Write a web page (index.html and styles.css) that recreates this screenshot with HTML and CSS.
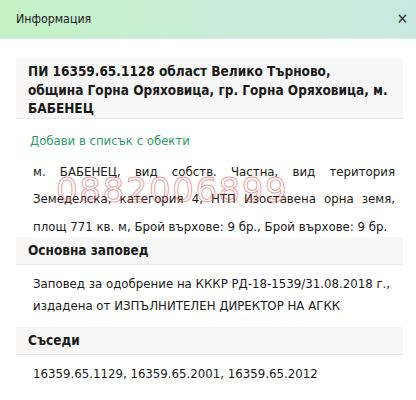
FILE: index.html
```html
<!DOCTYPE html>
<html lang="bg">
<head>
    <meta charset="UTF-8">
    <meta name="viewport" content="width=device-width, initial-scale=1.0">
    <title>Информация</title>
    <link rel="stylesheet" href="styles.css">
</head>
<body>
    <div class="info-panel">
        <div class="info-header">
            <span class="info-title">Информация</span>
            <span class="close-btn">&#x2715;</span>
        </div>
        <div class="info-body">
            <div class="parcel-title">ПИ 16359.65.1128 област Велико Търново,<br>община Горна Оряховица, гр. Горна Оряховица, м. БАБЕНЕЦ</div>
            <a class="add-link" href="#">Добави в списък с обекти</a>
            <div class="parcel-desc">
                <p>м. БАБЕНЕЦ, вид собств. Частна, вид територия Земеделска, категория 4, НТП Изоставена орна земя, площ 771 кв. м, Брой върхове: 9 бр., Брой върхове: 9 бр.</p>
                <span class="watermark">0882006899</span>
            </div>
            <div class="section-head first">Основна заповед</div>
            <p class="section-text">Заповед за одобрение на КККР РД-18-1539/31.08.2018 г., издадена от ИЗПЪЛНИТЕЛЕН ДИРЕКТОР НА АГКК</p>
            <div class="section-head">Съседи</div>
            <p class="section-text">16359.65.1129, 16359.65.2001, 16359.65.2012</p>
        </div>
    </div>
</body>
</html>
```

FILE: styles.css
```css
body {
    margin: 0;
    background: #fff;
    font-family: "DejaVu Sans Condensed", "DejaVu Sans", sans-serif;
    color: #1a1a1a;
}

.info-panel {
    width: 416px;
}

.info-header {
    height: 39px;
    display: flex;
    align-items: center;
    justify-content: space-between;
    padding: 0 8px 0 16px;
    background: linear-gradient(90deg, #c4f2c6 0%, #c9ecd9 55%, #c8e8df 100%);
    border-bottom: 1px solid #dde9e4;
    box-sizing: border-box;
}

.info-title {
    font-size: 12.3px;
}

.close-btn {
    font-size: 15px;
    font-weight: bold;
    color: #333;
}

.info-body {
    padding: 19px 13px 0 16px;
}

.parcel-title {
    background: #f7f7f7;
    border-bottom: 1px solid #e8e8e8;
    padding: 4px 12px 0;
    font-size: 13.5px;
    font-weight: bold;
    line-height: 18.5px;
}

.add-link {
    display: block;
    margin: 14px 0 0 14px;
    font-size: 13px;
    color: #2b9c69;
    text-decoration: none;
}

.parcel-desc {
    position: relative;
    padding: 0 8px 0 17px;
}

.parcel-desc p {
    margin: 10px 0 0;
    font-size: 13.1px;
    line-height: 27.5px;
    text-align: justify;
}

/* phone number stamped over the description */
.watermark {
    position: absolute;
    left: 40px;
    top: 12px;
    font-family: "DejaVu Sans", sans-serif;
    font-size: 34px;
    letter-spacing: 1.6px;
    color: transparent;
    -webkit-text-stroke: 1px rgba(214, 70, 70, 0.55);
    pointer-events: none;
}

.section-head {
    margin-top: 10px;
    background: #f7f7f7;
    border-bottom: 1px solid #e8e8e8;
    padding: 0 12px;
    height: 27px;
    line-height: 27px;
    font-size: 13.5px;
    font-weight: bold;
}

.section-head.first {
    margin-top: -3px;
}

.section-text {
    margin: 8px 0 0;
    padding-left: 17px;
    font-size: 13.1px;
    line-height: 22px;
}
```
